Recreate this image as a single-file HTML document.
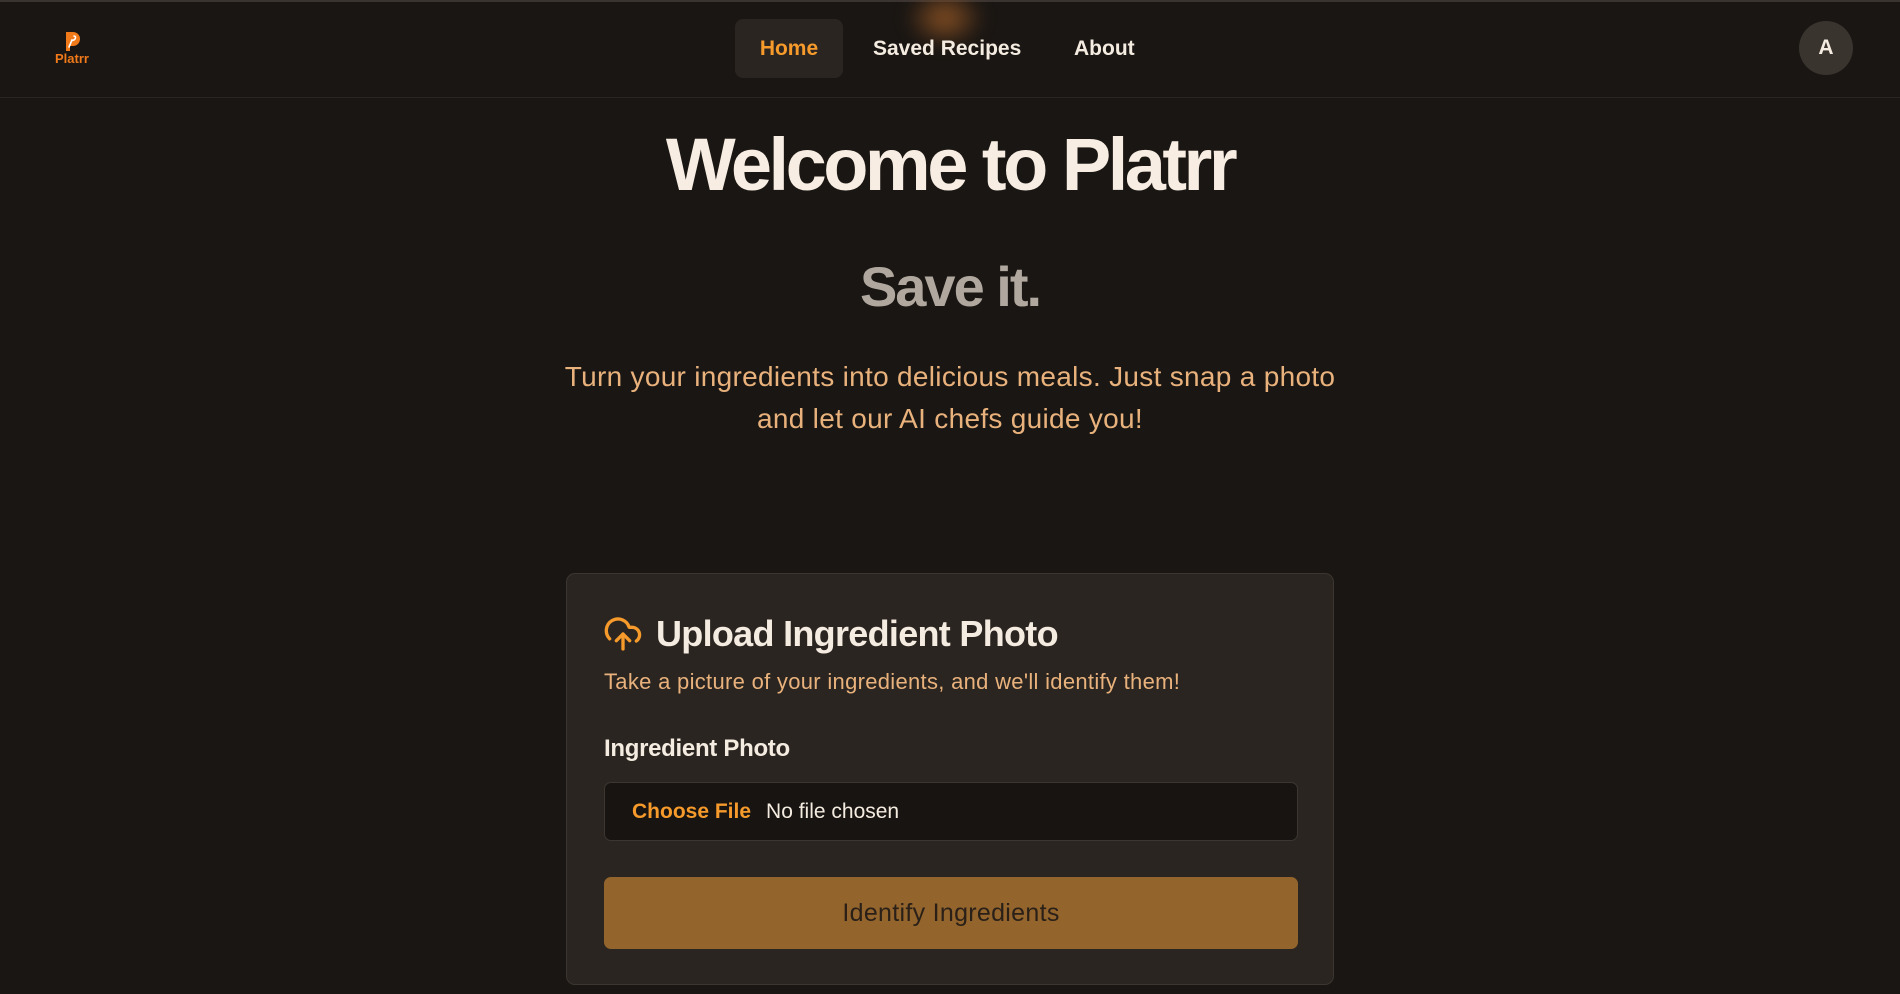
<!DOCTYPE html>
<html><head><meta charset="utf-8"><style>
*{box-sizing:border-box;margin:0;padding:0}
body{width:1900px;height:994px;background:#1a1613;font-family:"Liberation Sans",sans-serif;color:#f5ece1;overflow:hidden;position:relative}
.top{position:absolute;left:0;top:0;width:1900px;height:2px;background:#3a3431}
nav{position:absolute;top:0;left:0;width:1900px;height:98px;border-bottom:1px solid #2c2622}
.glow{position:absolute;left:905px;top:-12px;width:80px;height:60px;border-radius:50%;background:radial-gradient(#8a5224 0%,rgba(138,82,36,0) 70%);filter:blur(8px)}
.logo{position:absolute;left:55px;top:32px;width:34px;text-align:center}
.logo .p{width:15px;height:19px;margin:0 auto;position:relative}
.logo .t{font-size:13px;font-weight:bold;color:#f07a1a;line-height:14px;margin-top:1px}
.navl{position:absolute;top:19px;height:59px;display:flex;align-items:center;font-size:21px;font-weight:bold;color:#f5ece1}
.home{left:735px;width:108px;justify-content:center;background:#2a2521;border-radius:8px;color:#f59a2b}
.avatar{position:absolute;left:1799px;top:21px;width:54px;height:54px;border-radius:50%;background:#3a342f;color:#f5ece1;font-weight:bold;font-size:21px;display:flex;align-items:center;justify-content:center}
h1{position:absolute;top:122px;left:0;width:1900px;text-align:center;font-size:74px;font-weight:bold;letter-spacing:-3.5px;color:#f7ede2}
h2{position:absolute;top:254px;left:0;width:1900px;text-align:center;font-size:56px;font-weight:bold;letter-spacing:-2px;color:#b0a89f}
.lead{position:absolute;top:356px;left:0;width:1900px;text-align:center;font-size:28px;line-height:42px;color:#e9b27c;letter-spacing:0.3px}
.card{position:absolute;left:566px;top:573px;width:768px;height:412px;background:#2a2520;border:1px solid #3d3630;border-radius:9px}
.ch{position:absolute;left:36px;top:39px;display:flex;align-items:center;font-size:36px;font-weight:bold;color:#f5ece1;letter-spacing:-0.7px}
.ch svg{margin-right:13px}
.sub{position:absolute;left:37px;top:95px;font-size:22px;color:#e9b27c;letter-spacing:0.3px}
.lbl{position:absolute;left:37px;top:161px;font-size:24px;font-weight:bold;color:#f5ece1;letter-spacing:-0.3px}
.inp{position:absolute;left:37px;top:208px;width:694px;height:59px;background:#181411;border:1px solid #3d3630;border-radius:7px;display:flex;align-items:center;padding-left:27px;font-size:21px}
.inp b{color:#f59a2b;margin-right:15px}
.btn{position:absolute;left:37px;top:303px;width:694px;height:72px;background:#93652d;border-radius:7px;display:flex;align-items:center;justify-content:center;font-size:25px;color:#2a2018;letter-spacing:0.3px}
</style></head><body>
<div class="top"></div>
<nav>
<div class="glow"></div>
<div class="logo"><div class="p"><svg width="15" height="19" viewBox="0 0 15 19"><path d="M1 0h7a7 7 0 0 1 0 14H5v5H1z" fill="#f07a1a"/><path d="M9 4c1.5 0 2 1.5 1 3s-2 1.5-3 1L4 15" stroke="#fff" stroke-width="1.6" fill="none" stroke-linecap="round"/></svg></div><div class="t">Platrr</div></div>
<div class="navl home">Home</div>
<div class="navl" style="left:873px">Saved Recipes</div>
<div class="navl" style="left:1074px">About</div>
<div class="avatar">A</div>
</nav>
<h1>Welcome to Platrr</h1>
<h2>Save it.</h2>
<div class="lead">Turn your ingredients into delicious meals. Just snap a photo<br>and let our AI chefs guide you!</div>
<div class="card">
<div class="ch"><svg width="40" height="40" viewBox="0 0 24 24" fill="none" stroke="#f59a2b" stroke-width="2" stroke-linecap="round" stroke-linejoin="round"><path d="M4 14.9A7 7 0 1 1 15.7 8h1.8a4.5 4.5 0 0 1 2.5 8.2"/><path d="M12 12v9"/><path d="m16 16-4-4-4 4"/></svg>Upload Ingredient Photo</div>
<div class="sub">Take a picture of your ingredients, and we'll identify them!</div>
<div class="lbl">Ingredient Photo</div>
<div class="inp"><b>Choose File</b>No file chosen</div>
<div class="btn">Identify Ingredients</div>
</div>
</body></html>
